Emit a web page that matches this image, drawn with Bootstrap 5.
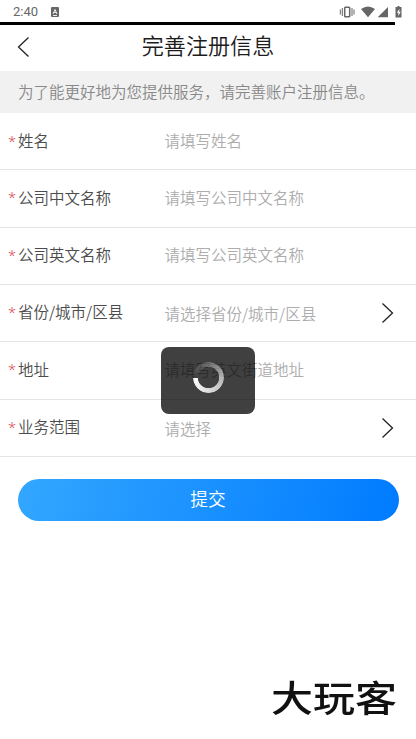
<!DOCTYPE html>
<html lang="zh-CN">
<head>
<meta charset="utf-8">
<meta name="viewport" content="width=device-width, initial-scale=1">
<title>完善注册信息</title>
<link href="https://cdn.jsdelivr.net/npm/bootstrap@5.3.0/dist/css/bootstrap.min.css" rel="stylesheet">
<style>
body{font-family:"Noto Sans CJK SC",sans-serif;font-weight:350;font-size:15.5px;line-height:24px;color:#4c4c4c;background:#fff;height:739px;overflow:hidden}
.status{height:22px;padding:1px 13px 0;font:400 13px/22px Roboto,sans-serif;color:#666}
.clock{width:38px}
.progress-line{height:3px;width:395px;background:#000}
.topbar{height:46px;padding:0 17px 2px}
.topbar h1{font-size:22.1px;font-weight:350;line-height:32px;color:#1c1c1c;padding-bottom:7px}
.side{width:14px}
.notice{height:42px;padding:0 18px 3px;background:#f1f1f1;color:#888}
.field{height:57px;padding:0 22px 4px 8px;border-bottom:1px solid #e4e4e4}
.field:first-child{padding-bottom:2px}
.field.tall{height:58px}
.star{width:10px;color:#d9444c;font-family:"Noto Sans",sans-serif;font-size:14.5px;padding-top:1px}
.name{width:146.5px}
.hint{color:#adadad}
.pick .hint{padding-top:3px}
.pick svg{margin-top:3px}
.submit{height:42px;margin:22px 17.5px 0;background:linear-gradient(105deg,#33a7ff,#007bff);font-size:17.7px;font-weight:350;line-height:38px;color:#fff}
.submit span{display:block;padding-bottom:5px}
.loading{left:161px;top:347px;width:94px;height:67px;border-radius:8px;background:rgba(0,0,0,.75);padding-bottom:7px}
.ring{width:31px;height:31px;border-radius:50%;background:conic-gradient(from 270deg,rgba(255,255,255,0),rgba(255,255,255,.25) 90deg,rgba(255,255,255,.62) 180deg,rgba(255,255,255,.82) 270deg,#fff);-webkit-mask:radial-gradient(circle,transparent 10.3px,#000 11px);mask:radial-gradient(circle,transparent 10.3px,#000 11px)}
.brand{right:19px;bottom:21px;font-size:42px;line-height:44px;font-weight:500;color:#111;transform:scaleY(.87)}
</style>
</head>
<body class="position-relative">
<div class="status d-flex align-items-center">
  <span class="clock">2:40</span>
  <svg width="8" height="10" viewBox="0 0 8 10"><rect width="8" height="10" rx="1" fill="#666"/><path d="M2 7 4 2.5 6 7M2.8 5.4h2.4M2 8.5h4" fill="none" stroke="#fff" stroke-width=".9"/></svg>
  <svg class="ms-auto" width="66" height="14" viewBox="337 4 66 14" fill="#666"><path d="M340.3 8.500v5M342.3 7v8M352 7v8M354 8.500v5" stroke="#666" fill="none"/><rect x="344.7" y="6.200" width="5" height="9.600" rx=".8" fill="none" stroke="#666" stroke-width="1.500"/><path d="M361 8q7-5 14 0l-7 8.300zM388 6v10.300h-10.300zM397.500 5h2v1h2v10.500h-6V6h2z"/><path d="m399.400 7.800-2.500 4h1.500v3.200l2.300-4.200h-1.500z" fill="#fff"/></svg>
</div>
<div class="progress-line"></div>
<header class="topbar d-flex align-items-center justify-content-between">
  <svg class="side" height="24" viewBox="0 0 14 24"><path d="M11.500 2.500 1.500 12l10 9.500" fill="none" stroke="#222" stroke-width="1.300"/></svg>
  <h1 class="m-0">完善注册信息</h1>
  <span class="side"></span>
</header>
<div class="notice d-flex align-items-center text-nowrap">为了能更好地为您提供服务，请完善账户注册信息。</div>
<main>
  <div class="field d-flex align-items-center"><span class="star">*</span><span class="name">姓名</span><span class="hint">请填写姓名</span></div>
  <div class="field tall d-flex align-items-center"><span class="star">*</span><span class="name">公司中文名称</span><span class="hint">请填写公司中文名称</span></div>
  <div class="field d-flex align-items-center"><span class="star">*</span><span class="name">公司英文名称</span><span class="hint">请填写公司英文名称</span></div>
  <div class="field pick d-flex align-items-center"><span class="star">*</span><span class="name">省份/城市/区县</span><span class="hint">请选择省份/城市/区县</span><svg class="ms-auto" width="13" height="22" viewBox="0 0 13 22"><path d="m1.500 1.500 10 9.500-10 9.500" fill="none" stroke="#222" stroke-width="1.300"/></svg></div>
  <div class="field tall d-flex align-items-center"><span class="star">*</span><span class="name">地址</span><span class="hint">请填写英文街道地址</span></div>
  <div class="field pick d-flex align-items-center"><span class="star">*</span><span class="name">业务范围</span><span class="hint">请选择</span><svg class="ms-auto" width="13" height="22" viewBox="0 0 13 22"><path d="m1.500 1.500 10 9.500-10 9.500" fill="none" stroke="#222" stroke-width="1.300"/></svg></div>
  <div class="d-grid"><button type="button" class="submit btn border-0 rounded-pill p-0"><span>提交</span></button></div>
</main>
<div class="loading position-absolute d-flex align-items-center justify-content-center"><div class="ring"></div></div>
<div class="brand position-absolute">大玩客</div>
<script src="https://cdn.jsdelivr.net/npm/bootstrap@5.3.0/dist/js/bootstrap.bundle.min.js"></script>
</body>
</html>
